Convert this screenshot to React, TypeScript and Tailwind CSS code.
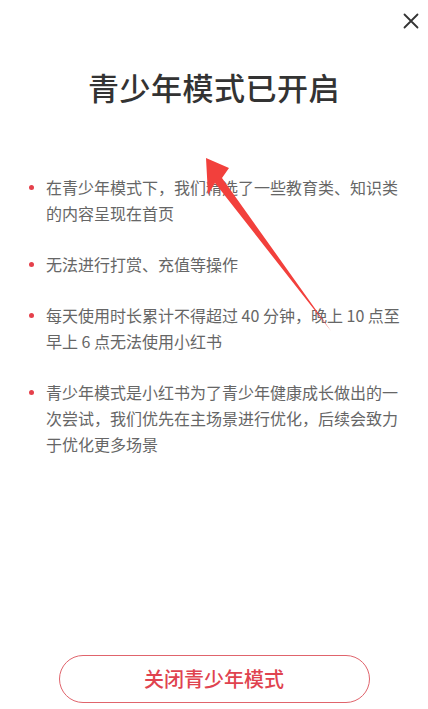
import React from 'react';

const items = [
  '在青少年模式下，我们精选了一些教育类、知识类的内容呈现在首页',
  '无法进行打赏、充值等操作',
  '每天使用时长累计不得超过 40 分钟，晚上 10 点至早上 6 点无法使用小红书',
  '青少年模式是小红书为了青少年健康成长做出的一次尝试，我们优先在主场景进行优化，后续会致力于优化更多场景',
];

const App: React.FC = () => {
  return (
    <div
      className="relative flex flex-col h-[709px] w-[428px] bg-white overflow-hidden"
      style={{ fontFamily: '"Noto Sans CJK SC", "Noto Sans", sans-serif' }}
    >
      <div className="flex justify-end items-center h-[42px] pr-[5px]">
        <button className="w-[24px] h-[24px] flex items-center justify-center">
          <svg width="16" height="16" viewBox="0 0 16 16" fill="none">
            <path d="M1.5 1.5 L14.5 14.5 M14.5 1.5 L1.5 14.5" stroke="#333" strokeWidth="1.8" strokeLinecap="round" />
          </svg>
        </button>
      </div>

      <h1 className="mt-[25px] text-center text-[31px] leading-[40px] font-medium text-[#333] tracking-[0.5px]">青少年模式已开启</h1>

      <ul className="mt-[67px] pl-[29px] pr-[22px] flex flex-col gap-[25px]">
        {items.map((t, i) => (
          <li key={i} className="flex gap-[12px]">
            <span className="mt-[11px] w-[5px] h-[5px] shrink-0 rounded-full bg-[#e5404b]" />
            <span className="text-[16px] leading-[26px] text-[#666]">{t}</span>
          </li>
        ))}
      </ul>

      <div className="mt-auto mb-[6px] flex justify-center">
        <button className="w-[311px] h-[48px] rounded-full border-[1.5px] border-[#e0646c] text-[20px] text-[#e0434f] font-medium">
          关闭青少年模式
        </button>
      </div>

      {/* annotation arrow drawn over the screenshot */}
      <svg className="absolute left-0 top-0 pointer-events-none" width="428" height="709" viewBox="0 0 428 709">
        <polygon points="206,158 229,168 222,178 331,331 215,183 208,195" fill="#f2403c" />
      </svg>
    </div>
  );
};

export default App;
